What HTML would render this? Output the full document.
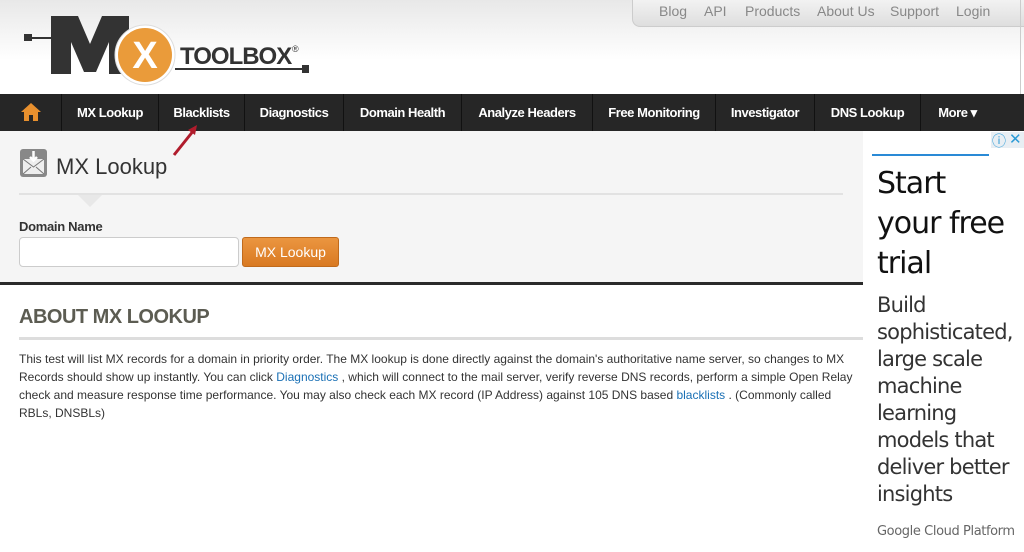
<!DOCTYPE html>
<html><head><meta charset="utf-8"><style>
*{margin:0;padding:0;box-sizing:border-box}
body{width:1024px;height:552px;overflow:hidden;background:#fff;font-family:"Liberation Sans",Arial,sans-serif;position:relative}
.hdr{position:absolute;left:0;top:0;width:1024px;height:94px;background:linear-gradient(#e8e8e8,#fff 60px)}
.top{position:absolute;left:632px;top:0;width:392px;height:27px;background:linear-gradient(#f2f2f2,#dedede);border-radius:0 0 0 8px;border-left:1px solid #ccc;border-bottom:1px solid #ccc;font-size:14px;color:#888}
.top span{position:absolute;top:3px}
.nav{position:absolute;left:0;top:94px;width:1024px;height:37px;background:#262626;color:#fff;font-size:13px;font-weight:bold;letter-spacing:-0.45px}
.nav div{position:absolute;top:0;height:37px;line-height:37px;border-left:1px solid #111;text-align:center}
.panel{position:absolute;left:0;top:131px;width:863px;height:151px;background:#f5f5f5}
.bar{position:absolute;left:0;top:282px;width:863px;height:3px;background:#2a2a2a}
a{color:#1a70b5;text-decoration:none}
</style></head><body>
<div class="hdr"></div>
<svg style="position:absolute;left:0;top:0" width="320" height="90">
<rect x="24" y="34" width="8" height="7" fill="#333"/><rect x="30" y="37" width="22" height="2" fill="#333"/>
<path d="M51 16h27l12 28 12-28h27v58h-20v-32l-13 30h-12l-13-30v32h-20z" fill="#333"/>
<rect x="175" y="68" width="130" height="2" fill="#333"/><rect x="302" y="65" width="7" height="8" fill="#333"/>
<circle cx="145" cy="55" r="30" fill="#fff" stroke="#ddd"/><circle cx="145" cy="55" r="27" fill="#ea9b3a"/>
<text x="145" y="68" text-anchor="middle" font-family="Liberation Sans" font-weight="bold" font-size="38" fill="#fff">X</text>
<text x="180" y="64" font-family="Liberation Sans" font-weight="bold" font-size="24" fill="#333" letter-spacing="-1">TOOLBOX</text>
<text x="292" y="52" font-family="Liberation Sans" font-size="9" fill="#333">®</text>
</svg>
<div class="top"><span style="left:26px">Blog</span><span style="left:71px">API</span><span style="left:112px">Products</span><span style="left:184px">About Us</span><span style="left:257px">Support</span><span style="left:323px">Login</span></div>
<div class="nav">
<div style="left:0;width:61px;border:none"><svg width="22" height="20" style="margin-top:8px" viewBox="0 0 22 20"><path d="M11 1L1 10h3v9h5v-6h4v6h5v-9h3z" fill="#e8902e"/></svg></div>
<div style="left:61px;width:97px">MX Lookup</div>
<div style="left:158px;width:86px">Blacklists</div>
<div style="left:244px;width:99px">Diagnostics</div>
<div style="left:343px;width:118px">Domain Health</div>
<div style="left:461px;width:131px">Analyze Headers</div>
<div style="left:592px;width:123px">Free Monitoring</div>
<div style="left:715px;width:99px">Investigator</div>
<div style="left:814px;width:106px">DNS Lookup</div>
<div style="left:920px;width:74px">More ▾</div>
</div>
<div class="panel"></div>
<svg style="position:absolute;left:170px;top:124px" width="30" height="34"><path d="M4 31L24 6" stroke="#b01c2c" stroke-width="3"/><path d="M18 6l9-5-2 10z" fill="#b01c2c"/></svg>
<svg style="position:absolute;left:19px;top:148px" width="29" height="30" viewBox="0 0 29 30"><rect x="1" y="1" width="27" height="28" rx="3" fill="#888"/><rect x="4" y="11" width="21" height="15" fill="#eee"/><path d="M4 11l10.5 8 10.5-8M4 26l8-7M25 26l-8-7" stroke="#777" fill="none"/><path d="M14.5 3v9M11 9l3.5 3.5 3.5-3.5" stroke="#fff" stroke-width="2.5" fill="none"/></svg>
<div style="position:absolute;left:56px;top:154px;font-size:22px;color:#333">MX Lookup</div>
<div style="position:absolute;left:19px;top:193px;width:824px;height:2px;background:#e2e2e2"></div>
<svg style="position:absolute;left:78px;top:195px" width="24" height="12"><path d="M0 0h24L12 12z" fill="#e8e8e8"/></svg>
<div style="position:absolute;left:19px;top:219px;font-size:13px;font-weight:bold;color:#333;letter-spacing:-0.3px">Domain Name</div>
<div style="position:absolute;left:19px;top:237px;width:220px;height:30px;background:#fff;border:1px solid #ccc;border-radius:4px"></div>
<div style="position:absolute;left:242px;top:237px;width:97px;height:30px;background:linear-gradient(#eb9640,#d97a22);border:1px solid #c06a1c;border-radius:3px;color:#fff;font-size:14px;line-height:28px;text-align:center">MX Lookup</div>
<div class="bar"></div>
<div style="position:absolute;left:19px;top:306px;font-size:20px;font-weight:bold;color:#5c5c52;letter-spacing:-0.5px">ABOUT MX LOOKUP</div>
<div style="position:absolute;left:19px;top:337px;width:844px;height:3px;background:#ddd"></div>
<div style="position:absolute;left:19px;top:350px;width:840px;font-size:12px;line-height:18px;color:#333">This test will list MX records for a domain in priority order. The MX lookup is done directly against the domain's authoritative name server, so changes to MX Records should show up instantly. You can click <a>Diagnostics</a> , which will connect to the mail server, verify reverse DNS records, perform a simple Open Relay check and measure response time performance. You may also check each MX record (IP Address) against 105 DNS based <a>blacklists</a> . (Commonly called RBLs, DNSBLs)</div>
<div style="position:absolute;left:1020px;top:0;width:1px;height:94px;background:#ccc"></div>
<div style="position:absolute;left:991px;top:132px;width:33px;height:16px;background:#e8eef3"></div>
<div style="position:absolute;left:992px;top:131px;font-size:14px;color:#2a9ad6">ⓘ</div>
<div style="position:absolute;left:1009px;top:130px;font-size:15px;color:#2a9ad6">✕</div>
<div style="position:absolute;left:872px;top:154px;width:117px;height:2px;background:#2a8ad6"></div>
<div style="position:absolute;left:877px;top:164px;font-size:30px;line-height:40px;color:#111;font-family:'DejaVu Sans',sans-serif;letter-spacing:-1px">Start<br>your free<br>trial</div>
<div style="position:absolute;left:877px;top:292px;font-size:21px;line-height:27px;color:#333;font-family:'DejaVu Sans',sans-serif;letter-spacing:-0.8px">Build<br>sophisticated,<br>large scale<br>machine<br>learning<br>models that<br>deliver better<br>insights</div>
<div style="position:absolute;left:877px;top:524px;font-size:13px;color:#666;font-family:'DejaVu Sans',sans-serif;letter-spacing:-0.4px">Google Cloud Platform</div>
</body></html>
